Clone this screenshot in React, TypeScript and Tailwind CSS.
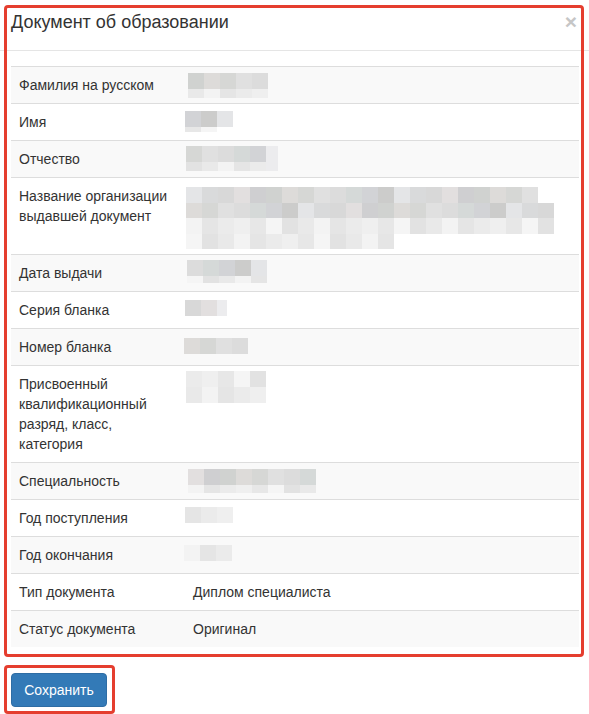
import React from 'react';

type MosaicRow = { n: number; h: string; light?: boolean; tail?: string };
type Blur = { box: string; seed: number; rows: MosaicRow[] };

const DARK = [
  'bg-[#e2dfdf]', 'bg-[#d0d2d0]', 'bg-[#d6d7d5]', 'bg-[#dcdcdc]', 'bg-[#d2d3d6]',
  'bg-[#e4e5e7]', 'bg-[#d8d8d8]', 'bg-[#cfcfd1]', 'bg-[#dddbd9]', 'bg-[#e0e0e0]',
  'bg-[#d5d9d8]', 'bg-[#cccccb]', 'bg-[#d9dadb]',
];
const LIGHT = [
  'bg-[#efefef]', 'bg-[#ebebeb]', 'bg-[#e5e5e5]', 'bg-[#f3f3f3]',
  'bg-[#e9e9e9]', 'bg-[#e2e2e2]', 'bg-[#f5f5f5]', 'bg-[#e7e7e7]',
];

function Mosaic({ blur }: { blur: Blur }) {
  return (
    <div className={`flex flex-col ${blur.box}`}>
      {blur.rows.map((row, r) => {
        const pal = row.light ? LIGHT : DARK;
        return (
          <div key={r} className="flex">
            {Array.from({ length: row.n }).map((_, i) => (
              <div
                key={i}
                className={`w-4 shrink-0 ${row.h} ${pal[(i * 7 + r * 3 + blur.seed) % pal.length]}`}
              />
            ))}
            {row.tail && <div className={`shrink-0 ${row.h} ${row.tail} bg-[#ececee]`} />}
          </div>
        );
      })}
    </div>
  );
}

type Row = { label: string; lines: number; value?: string; blur?: Blur };

const rows: Row[] = [
  {
    label: 'Фамилия на русском',
    lines: 1,
    blur: { box: '-ml-[5px] -mt-[2px]', seed: 1, rows: [{ n: 5, h: 'h-4' }, { n: 5, h: 'h-[9px]', light: true }] },
  },
  {
    label: 'Имя',
    lines: 1,
    blur: { box: '-ml-[8px] -mt-[1px]', seed: 4, rows: [{ n: 3, h: 'h-4' }, { n: 2, h: 'h-[5px]', light: true }] },
  },
  {
    label: 'Отчество',
    lines: 1,
    blur: {
      box: '-ml-[7px] -mt-[3px]',
      seed: 2,
      rows: [{ n: 5, h: 'h-4', tail: 'w-3' }, { n: 5, h: 'h-[9px]', light: true, tail: 'w-3' }],
    },
  },
  {
    label: 'Название организации выдавшей документ',
    lines: 3,
    blur: {
      box: '-ml-[7px] mt-[1px]',
      seed: 5,
      rows: [
        { n: 22, h: 'h-4' },
        { n: 23, h: 'h-[15px]' },
        { n: 23, h: 'h-4', light: true },
        { n: 13, h: 'h-[15px]', light: true },
      ],
    },
  },
  {
    label: 'Дата выдачи',
    lines: 1,
    blur: { box: '-ml-[6px] -mt-[3px]', seed: 3, rows: [{ n: 5, h: 'h-4' }, { n: 5, h: 'h-[7px]', light: true }] },
  },
  {
    label: 'Серия бланка',
    lines: 1,
    blur: { box: '-ml-[8px]', seed: 6, rows: [{ n: 2, h: 'h-4', tail: 'w-[10px]' }] },
  },
  {
    label: 'Номер бланка',
    lines: 1,
    blur: { box: '-ml-[9px] mt-[1px]', seed: 8, rows: [{ n: 4, h: 'h-4' }] },
  },
  {
    label: 'Присвоенный квалификационный разряд, класс, категория',
    lines: 4,
    blur: { box: '-ml-[7px] -mt-[3px]', seed: 9, rows: [{ n: 5, h: 'h-4', light: true }, { n: 5, h: 'h-4', light: true }] },
  },
  {
    label: 'Специальность',
    lines: 1,
    blur: { box: '-ml-[5px] -mt-[2px]', seed: 0, rows: [{ n: 8, h: 'h-4' }, { n: 8, h: 'h-[8px]', light: true }] },
  },
  {
    label: 'Год поступления',
    lines: 1,
    blur: { box: '-ml-[8px] -mt-[1px]', seed: 10, rows: [{ n: 3, h: 'h-4', light: true }] },
  },
  {
    label: 'Год окончания',
    lines: 1,
    blur: { box: '-ml-[9px]', seed: 11, rows: [{ n: 3, h: 'h-4', light: true }] },
  },
  { label: 'Тип документа', lines: 1, value: 'Диплом специалиста' },
  { label: 'Статус документа', lines: 1, value: 'Оригинал' },
];

const heights: Record<number, string> = { 1: 'h-5', 3: 'h-[60px]', 4: 'h-20' };

export default function App() {
  return (
    <div className="relative w-[589px] h-[714px] overflow-hidden bg-white font-['Liberation_Sans',Arial,sans-serif] text-[14px] leading-5 text-[#333]">
      {/* шапка модального окна */}
      <div className="h-[51px] border-b border-[#e5e5e5] pl-[11px] pr-[12px] pt-[12px] flex justify-between items-start">
        <h4 className="text-[18px] leading-[20px] font-normal">Документ об образовании</h4>
        <span className="text-[21px] leading-[20px] font-bold text-[#c6c6c6]">×</span>
      </div>

      <div className="pl-[11px] pr-[10px] pt-[15px]">
        <table className="w-full border-collapse">
          <tbody>
            {rows.map((row, i) => (
              <tr key={row.label} className={i % 2 === 0 ? 'bg-[#f9f9f9]' : 'bg-white'}>
                <td className="w-[174px] p-2 align-top border-t border-[#ddd]">{row.label}</td>
                <td className="p-2 align-top border-t border-[#ddd]">
                  {row.blur ? (
                    <div className={`flex items-start ${heights[row.lines]}`}>
                      <Mosaic blur={row.blur} />
                    </div>
                  ) : (
                    row.value
                  )}
                </td>
              </tr>
            ))}
          </tbody>
        </table>
      </div>

      <div className="pl-[11px] mt-[26px]">
        <button
          type="button"
          className="w-[96px] h-[34px] rounded-[4px] bg-[#337ab7] border border-[#2e6da4] text-white text-[14px]"
        >
          Сохранить
        </button>
      </div>

      {/* красные рамки поверх */}
      <div className="pointer-events-none absolute left-[4px] top-[5px] w-[580px] h-[652px] border-[3px] border-[#e53e2f] rounded-[4px]" />
      <div className="pointer-events-none absolute left-[4px] top-[665px] w-[111px] h-[49px] border-[3px] border-[#e53e2f] rounded-[4px]" />
    </div>
  );
}
